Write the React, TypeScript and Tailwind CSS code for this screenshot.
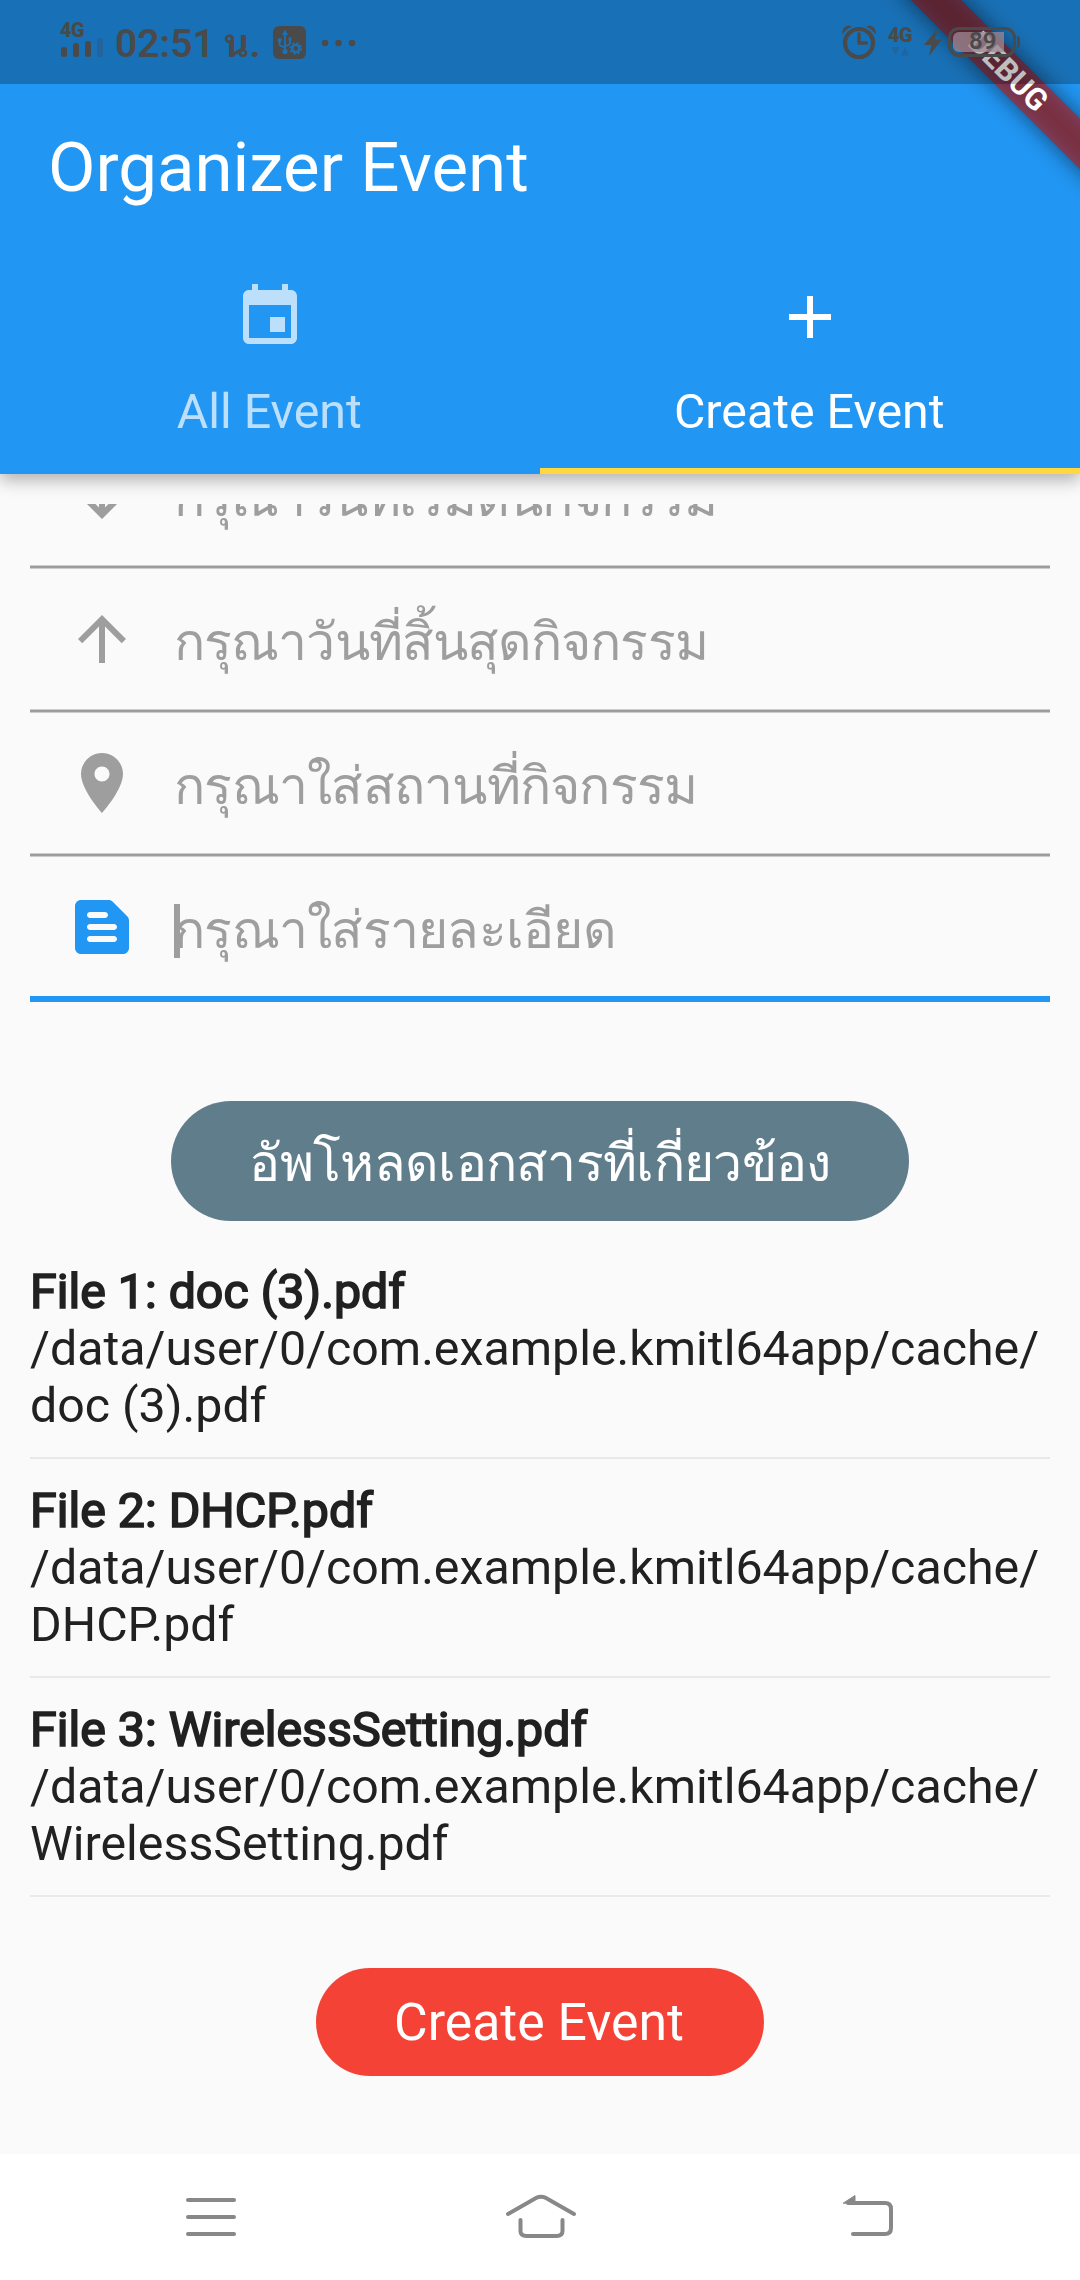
import React from "react";

const INK = "#4a4a4a";

function MaterialIcon({ d, className }: { d: string; className?: string }) {
  return (
    <svg viewBox="0 0 24 24" className={"block size-[72px] shrink-0 fill-current " + (className ?? "")}>
      <path d={d} fillRule="evenodd" />
    </svg>
  );
}

const icons = {
  event: "M17 12h-5v5h5v-5zM16 1v2H8V1H6v2H5c-1.11 0-1.99.9-1.99 2L3 19c0 1.1.89 2 2 2h14c1.1 0 2-.9 2-2V5c0-1.1-.9-2-2-2h-1V1h-2zm3 18H5V8h14v11z",
  add: "M19 13h-6v6h-2v-6H5v-2h6V5h2v6h6v2z",
  down: "M20 12l-1.41-1.41L13 16.17V4h-2v12.17l-5.58-5.59L4 12l8 8 8-8z",
  up: "M4 12l1.41 1.41L11 7.83V20h2V7.83l5.58 5.59L20 12l-8-8-8 8z",
  place: "M12 2C8.13 2 5 5.13 5 9c0 5.25 7 13 7 13s7-7.75 7-13c0-3.87-3.13-7-7-7zm0 9.5c-1.38 0-2.5-1.12-2.5-2.5s1.12-2.5 2.5-2.5 2.5 1.12 2.5 2.5-1.12 2.5-2.5 2.5z",
  note: "M20.41 8.41l-4.83-4.83c-.37-.37-.88-.58-1.41-.58H5c-1.1 0-2 .9-2 2v14c0 1.1.9 2 2 2h14c1.1 0 2-.9 2-2V9.83c0-.53-.21-1.04-.59-1.42zM8 7h5c.55 0 1 .45 1 1s-.45 1-1 1H8c-.55 0-1-.45-1-1s.45-1 1-1zm8 10H8c-.55 0-1-.45-1-1s.45-1 1-1h8c.55 0 1 .45 1 1s-.45 1-1 1zm0-4H8c-.55 0-1-.45-1-1s.45-1 1-1h8c.55 0 1 .45 1 1s-.45 1-1 1z",
};

function StatusBar() {
  return (
    <div className="relative z-20 flex h-[84px] items-start bg-black/25 text-[#4a4a4a]">
      <div className="ml-[60px] mt-[20px] w-[45px]">
        <div className="h-[18px] text-[20px] font-black leading-[20px] tracking-[-0.5px]">4G</div>
        <svg viewBox="0 0 45 20" className="block h-[20px] w-[45px]">
          <rect x="1" y="9" width="6" height="10" rx="2.5" fill={INK} />
          <rect x="13" y="5" width="6" height="14" rx="2.5" fill={INK} />
          <rect x="25" y="3" width="6" height="16" rx="2.5" fill={INK} />
          <rect x="37" y="0" width="6" height="19" rx="2.5" fill="#24639b" />
        </svg>
      </div>
      <div className="ml-[10px] mt-[21px] w-[158px] whitespace-nowrap font-['Roboto','Noto_Sans_Thai_Looped',sans-serif] text-[39px] font-semibold leading-[46px]">02:51 น.</div>
      <svg viewBox="0 0 33 33" className="mt-[26px] block size-[33px]">
        <rect width="33" height="33" rx="6" fill={INK} />
        <g fill="none" stroke="#1b71b5" strokeWidth="1.8">
          <path d="M12 6v20M6.500 15v3q0 2.500 5.500 3M17 13v4q0 2-5 3" />
          <circle cx="22.800" cy="22.500" r="3.600" strokeWidth="2.400" />
          <circle cx="22.800" cy="22.500" r="5.400" strokeWidth="1.800" strokeDasharray="2.120 2.120" />
        </g>
        <path d="M12 3.500l3 5.500H9zM5 12.500h3.500v3.500H5zM15.500 11.500h3v3h-3z" fill="#1b71b5" />
        <circle cx="12" cy="25.500" r="2.600" fill="#1b71b5" />
      </svg>
      <svg viewBox="0 0 36 8" className="ml-[15px] mt-[39px] block h-[8px] w-[36px] fill-current">
        <circle cx="4" cy="4" r="3.200" />
        <circle cx="17.500" cy="4" r="3.200" />
        <circle cx="31" cy="4" r="3.200" />
      </svg>
      <svg viewBox="0 0 36 36" className="ml-auto mt-[24px] block size-[36px]" fill="none" stroke={INK}>
        <circle cx="18" cy="19" r="14" strokeWidth="4.200" />
        <path d="M18 10v9h7.500" strokeWidth="3.400" strokeLinecap="round" strokeLinejoin="round" />
        <path d="M1.200 10.500Q1 2 8 1.500l3 1.200Q5 5 1.200 10.500zM34.800 10.500Q35 2 28 1.500l-3 1.200q6 2.300 9.800 7.800z" fill={INK} stroke="none" />
      </svg>
      <div className="ml-[11px] mt-[25px] w-[27px]">
        <div className="h-[20px] text-[20px] font-black leading-[20px] tracking-[-0.500px]">4G</div>
        <svg viewBox="0 0 27 11" className="block h-[11px] w-[27px]">
          <path d="M3.500 2h8l-4 8zM13 10.500h8l-4-8z" fill="#20659f" />
        </svg>
      </div>
      <svg viewBox="0 0 18 28" className="ml-[9px] mt-[28px] block h-[28px] w-[18px] fill-current">
        <path d="M14 0L0 17h7.500L5 28 18 11.500h-7z" />
      </svg>
      <div className="relative ml-[6px] mr-[64px] mt-[27px] flex h-[30px] w-[68px] items-center rounded-[11px] border-3 border-[#4a4a4a] pl-[2px]">
        <div className="h-[20px] w-[51px] rounded-l-[6px] bg-[#9c8a94]/75" />
        <span className="absolute left-[18px] top-0 text-[24px] font-semibold leading-[23px]">89</span>
        <span className="absolute -right-[7px] top-[6px] h-[12px] w-[3px] rounded-r-[3px] bg-[#4a4a4a]" />
      </div>
    </div>
  );
}

function DebugBanner() {
  return (
    <div className="pointer-events-none absolute right-0 top-0 z-10 size-[260px] overflow-hidden">
      <div className="absolute left-[48px] top-[54px] flex h-[36px] w-[280px] rotate-45 items-center justify-center">
        <div className="absolute inset-0 bg-black/50 blur-[11px]" />
        <div className="absolute inset-0 bg-[#b71c1ca0]" />
        <span className="relative text-[30.600px] font-bold leading-[36px] text-white">DEBUG</span>
      </div>
    </div>
  );
}

function Tab({ icon, label, active }: { icon: string; label: string; active?: boolean }) {
  return (
    <div className={"flex h-[222px] flex-1 flex-col items-center border-b-[6px] pt-[29px] " + (active ? "border-[#ffd740] text-white" : "border-transparent text-white/70")}>
      <MaterialIcon d={icon} />
      <div className="mr-[1.500px] mt-[30px] text-[48.300px] leading-[57px]">{label}</div>
    </div>
  );
}

type FieldProps = { icon: string; hint: string; focused?: boolean; tracking?: string };

function Field({ icon, hint, focused, tracking = "tracking-[-0.750px]" }: FieldProps) {
  return (
    <div className="h-[144px]">
      <div className={"flex pt-[34px] " + (focused ? "h-[139px]" : "h-[140px]")}>
        <MaterialIcon d={icon} className={"ml-[36px] " + (focused ? "text-[#2196f3]" : "text-[#9e9e9e]")} />
        <div className={"relative ml-[36px] whitespace-nowrap pt-[4px] text-[51.750px] leading-[72px] text-[#9e9e9e] " + tracking}>
          {focused && <span className="absolute left-0 top-[13px] h-[54px] w-[6px] bg-[#9e9e9e]" />}
          {hint}
        </div>
      </div>
      {focused ? <div className="h-[6px] bg-[#2196f3]" /> : <div className="h-[4px] border-y border-[#cdcdcd] bg-[#9c9c9c]" />}
    </div>
  );
}

const files = ["doc (3).pdf", "DHCP.pdf", "WirelessSetting.pdf"];

export default function App() {
  return (
    <div className="flex h-[2280px] w-[1080px] flex-col overflow-hidden bg-[#fafafa] font-['Roboto','Liberation_Sans',sans-serif]">
      <header className="relative z-10 h-[474px] shrink-0 bg-[#2196f3] shadow-[0_6px_16px_rgba(0,0,0,0.3)]">
        <StatusBar />
        <DebugBanner />
        <h1 className="h-[168px] pl-[48px] text-[69px] leading-[168px] text-white">Organizer Event</h1>
        <div className="flex">
          <Tab icon={icons.event} label="All Event" />
          <Tab icon={icons.add} label="Create Event" active />
        </div>
      </header>

      <main className="mt-[30px] flex h-[1650px] shrink-0 flex-col overflow-hidden px-[30px]">
        <div className="-mt-[79px]">
          <Field icon={icons.down} hint="กรุณาวันที่เริ่มต้นกิจกรรม" tracking="tracking-[-1.250px]" />
          <Field icon={icons.up} hint="กรุณาวันที่สิ้นสุดกิจกรรม" tracking="tracking-[-0.900px]" />
          <Field icon={icons.place} hint="กรุณาใส่สถานที่กิจกรรม" />
          <Field icon={icons.note} hint="กรุณาใส่รายละเอียด" focused />
        </div>
        <button className="mt-[100px] h-[120px] w-[738px] shrink-0 self-center rounded-full bg-[#607d8b] pt-[5px] text-[51.750px] leading-[115px] tracking-[-0.700px] text-white">อัพโหลดเอกสารที่เกี่ยวข้อง</button>
        <div className="mt-[42px] text-[48.300px] leading-[57px] text-[#212121]">
          {files.map((name, i) => (
            <div key={name} className="h-[219px]">
              <div className="[-webkit-text-stroke:1.700px_#212121]">File {i + 1}: {name}</div>
              <div>/data/user/0/com.example.kmitl64app/cache/</div>
              <div>{name}</div>
              <div className="mt-[23px] h-[2px] bg-[#e9e9e9]" />
            </div>
          ))}
        </div>
        <button className="mt-[48px] h-[108px] w-[448px] shrink-0 self-center rounded-full bg-[#f44336] pr-[2px] text-[51.750px] leading-[110px] text-white">Create Event</button>
      </main>

      <nav className="flex h-[126px] shrink-0 items-start bg-white pt-[38px]">
        <svg viewBox="0 0 80 50" className="ml-[171px] block h-[50px] w-[80px]" fill="none" stroke="#888" strokeWidth="4" strokeLinecap="round">
          <path d="M17 8h46M17 25h46M17 42h46" />
        </svg>
        <svg viewBox="0 0 80 50" className="ml-[249px] block h-[50px] w-[80px]" fill="none" stroke="#888" strokeWidth="4" strokeLinecap="round">
          <path d="M8 22L36 6q5-2.500 10 0l28 16M20.500 28v11q0 5 6 5h30q6 0 6-5V28" />
        </svg>
        <svg viewBox="0 0 80 50" className="ml-[248px] block h-[50px] w-[80px]" fill="none" stroke="#888" strokeWidth="4" strokeLinecap="round">
          <path d="M20 11h37q6 0 6 6v19q0 6-6 6H25" />
          <path d="M15.500 11L27 3.500V11z" fill="#888" strokeWidth="1" />
        </svg>
      </nav>
    </div>
  );
}
